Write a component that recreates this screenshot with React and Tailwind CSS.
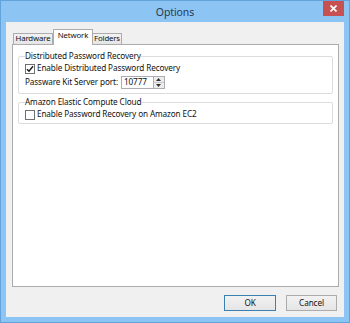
import React from 'react';

function CheckBox({ checked }) {
  return (
    <span className="w-[10px] h-[10px] border border-[#707070] bg-white flex items-center justify-center shrink-0">
      {checked && (
        <svg width="8" height="8" viewBox="0 0 8 8">
          <path d="M1 4.2 L3 6.3 L7 1.3" fill="none" stroke="#1a1a1a" strokeWidth="1.4" />
        </svg>
      )}
    </span>
  );
}

function Spinner() {
  return (
    <div className="w-[11px] h-[13px] flex flex-col border border-[#abadb3] border-l-0 bg-[#ececec]">
      <div className="flex-1 flex items-center justify-center border-b border-[#c8c8c8]">
        <svg width="5" height="3" viewBox="0 0 5 3"><path d="M0 3 L2.5 0 L5 3 Z" fill="#333" /></svg>
      </div>
      <div className="flex-1 flex items-center justify-center">
        <svg width="5" height="3" viewBox="0 0 5 3"><path d="M0 0 L2.5 3 L5 0 Z" fill="#333" /></svg>
      </div>
    </div>
  );
}

export default function App() {
  return (
    <div className="w-[350px] h-[323px] bg-[#8cc4f4] border border-[#64a2dc] flex flex-col font-['Noto_Sans',sans-serif] text-[#111]">
      {/* Title bar */}
      <div className="h-[21px] relative flex justify-center">
        <span className="text-[10.5px] tracking-[-0.1px] leading-[22px] text-[#2a3a4c]">Options</span>
        <div className="absolute right-[5px] top-0 w-[21px] h-[15px] bg-[#c75050] flex items-center justify-center">
          <svg width="7" height="7" viewBox="0 0 7 7">
            <path d="M0.5 0.5 L6.5 6.5 M6.5 0.5 L0.5 6.5" stroke="#fff" strokeWidth="1.6" />
          </svg>
        </div>
      </div>

      {/* Client area */}
      <div className="flex-1 mx-[5px] mb-[5px] bg-[#f0f0f0] flex flex-col">
        {/* Tabs */}
        <div className="h-[22px] flex items-end pl-[7px] text-[7.8px] tracking-[-0.15px]">
          <div className="w-[40px] h-[11px] border border-b-0 border-[#acacac] bg-gradient-to-b from-[#f2f2f2] to-[#e5e5e5] flex items-center justify-center">
            Hardware
          </div>
          <div className="w-[40px] h-[16px] -mb-[1px] relative z-10 border border-b-0 border-[#acacac] bg-white flex items-center justify-center pb-[3px]">
            Network
          </div>
          <div className="w-[29px] h-[11px] border border-b-0 border-l-0 border-[#acacac] bg-gradient-to-b from-[#f2f2f2] to-[#e5e5e5] flex items-center justify-center">
            Folders
          </div>
        </div>

        {/* Panel */}
        <div className="h-[243px] ml-[6px] mr-[5px] bg-white border border-[#acacac] px-[5px] pt-[5px] text-[8.2px] tracking-[-0.12px]">
          <fieldset className="border border-[#dcdcdc] rounded-[2px] px-[6px] pb-[4px]">
            <legend className="leading-[12px] px-0">Distributed Password Recovery</legend>
            <div className="h-[13px] flex items-center gap-[2px]">
              <CheckBox checked />
              <span>Enable Distributed Password Recovery</span>
            </div>
            <div className="h-[14px] flex items-center">
              <span>Passware Kit Server port:</span>
              <div className="ml-[3px] w-[33px] h-[13px] border border-[#abadb3] bg-white flex items-center pl-[2px]">
                10777
              </div>
              <Spinner />
            </div>
          </fieldset>

          <fieldset className="mt-[2px] border border-[#dcdcdc] rounded-[2px] px-[6px] pb-[2px]">
            <legend className="leading-[12px] px-0">Amazon Elastic Compute Cloud</legend>
            <div className="h-[13px] flex items-center gap-[2px]">
              <CheckBox />
              <span>Enable Password Recovery on Amazon EC2</span>
            </div>
          </fieldset>
        </div>

        {/* Buttons */}
        <div className="mt-[8px] flex justify-end gap-[10px] pr-[7px] text-[8.2px] tracking-[-0.12px]">
          <button className="w-[52px] h-[16px] border border-[#3c7fb1] bg-gradient-to-b from-[#f2f2f2] to-[#e5e5e5]">
            OK
          </button>
          <button className="w-[51px] h-[16px] border border-[#acacac] bg-gradient-to-b from-[#f2f2f2] to-[#e5e5e5]">
            Cancel
          </button>
        </div>
      </div>
    </div>
  );
}
